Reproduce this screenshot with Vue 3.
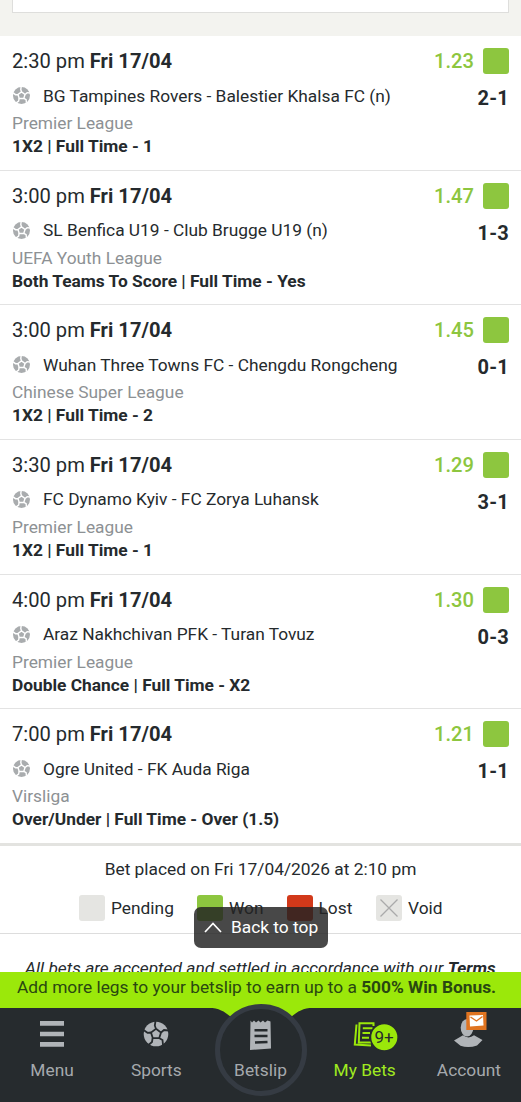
<template>
    <div class="page">
        <div class="top-area">
            <div class="top-box"></div>
        </div>

        <div class="bets">
            <div v-for="bet in bets" :key="bet.teams" class="bet">
                <div class="bet-head">
                    <div class="bet-time">{{ bet.time }} <b>Fri 17/04</b></div>
                    <div class="bet-odds">{{ bet.odds }}</div>
                    <span class="box won"></span>
                </div>
                <div class="bet-match">
                    <svg class="ball" viewBox="0 0 24 24">
                        <circle cx="12" cy="12" r="12" />
                        <path class="seams" d="M12 7L11 3.5L11.5 0M17 10.5L20 8L24 8.5M15.4 16.2L18.5 18L19 22M8.6 16.2L8 20L4.5 22.3M7 10.5L3.5 10.8L.2 8.3M12 6.8L17 10.5L15.2 16.2H8.8L7 10.5Z" />
                    </svg>
                    <div class="bet-teams">{{ bet.teams }}</div>
                    <div class="bet-score">{{ bet.score }}</div>
                </div>
                <div class="bet-league">{{ bet.league }}</div>
                <div class="bet-market">{{ bet.market }}</div>
            </div>
        </div>

        <div class="placed">
            <div class="placed-text">Bet placed on Fri 17/04/2026 at 2:10 pm</div>
            <div class="legend">
                <div v-for="item in legend" :key="item.name" class="legend-item" :class="item.name + '-item'">
                    <span class="box" :class="item.name">
                        <svg v-if="item.name === 'void'" viewBox="0 0 26 26">
                            <path d="M4.5 4.5L21.5 21.5M21.5 4.5L4.5 21.5" />
                        </svg>
                    </span>
                    <span>{{ item.label }}</span>
                </div>
            </div>
        </div>

        <div class="terms"><span>All bets are accepted and settled in accordance with our <b>Terms</b></span></div>

        <button class="to-top">
            <svg viewBox="0 0 18 11"><path d="M1 10L9 1.5L17 10" /></svg>
            <span>Back to top</span>
        </button>

        <div class="footer">
            <div class="bonus"><span>Add more legs to your betslip to earn up to a <b>500% Win Bonus.</b></span></div>
            <div class="nav">
                <svg class="nav-hump" viewBox="0 0 120 95">
                    <path class="hump-fill" d="M8 -.5H112C102 .5 97 3 90 9H30C23 3 18 .5 8 -.5Z" />
                    <circle cx="60" cy="42" r="43.5" />
                </svg>
                <div class="nav-item">
                    <svg class="icon" viewBox="0 0 60 44">
                        <path d="M18 13H42V17.8H18ZM18 23.7H42V28.3H18ZM18 34H42V38.7H18Z" />
                    </svg>
                    <span>Menu</span>
                </div>
                <div class="nav-item">
                    <svg class="icon" viewBox="0 0 60 44">
                        <g transform="translate(18 14)">
                            <circle cx="12" cy="12" r="12.3" />
                            <path class="seams" d="M12 7L10.8 3.5L11.5 -1M17 10.5L20 8L24.5 8.5M15.4 16.2L18.5 18L19 23M8.6 16.2L8 20L4.5 23M7 10.5L3.5 10.8L-.5 8M12 6.8L17 10.5L15.2 16.2H8.8L7 10.5Z" />
                        </g>
                    </svg>
                    <span>Sports</span>
                </div>
                <div class="nav-item">
                    <svg class="icon" viewBox="0 0 60 44">
                        <path d="M20.5 12.5L22 14.5L24 12.5L26 14.5L28.5 12.5L30.5 14.5L33 12.5L35 14.5L37.5 12.5L40.5 13.5L41 40.5L20 42Z" />
                        <path class="lines" d="M24.5 22.2H37.5M24.5 28H37.5M25 34.5L37.5 34" />
                    </svg>
                    <span>Betslip</span>
                </div>
                <div class="nav-item active">
                    <svg class="icon" viewBox="0 0 60 44">
                        <path class="stroke" d="M38.5 18V15.2H24.5L23.8 34.5H36M21.5 16.5L19.8 36.5L36 37.5M27.8 20.2H37.5M27.5 25H35M27 29.8H34" />
                        <circle class="count" cx="49.3" cy="29.3" r="13.8" />
                        <text x="49" y="35.3" text-anchor="middle">9+</text>
                    </svg>
                    <span>My Bets</span>
                </div>
                <div class="nav-item">
                    <svg class="icon" viewBox="0 0 60 44">
                        <path d="M15 32.5L24 27.3Q29.5 31.5 35 27.3L43.5 32L38 37.5Q29.5 40.5 21.5 37.8Z" />
                        <ellipse cx="28" cy="19.8" rx="6.3" ry="8.8" />
                        <path class="mail-bg" d="M27.3 4H47.5V22H27.3Z" />
                        <path class="mail" d="M30.5 7.5L44 7L44.5 17.5L31 18.5Z" />
                        <path class="mail-line" d="M31.5 9L37.5 13L43.5 8.5" />
                    </svg>
                    <span>Account</span>
                </div>
            </div>
        </div>
    </div>
</template>

<script setup>
const bets = [
    { time: '2:30 pm', odds: '1.23', teams: 'BG Tampines Rovers - Balestier Khalsa FC (n)', score: '2-1', league: 'Premier League', market: '1X2 | Full Time - 1' },
    { time: '3:00 pm', odds: '1.47', teams: 'SL Benfica U19 - Club Brugge U19 (n)', score: '1-3', league: 'UEFA Youth League', market: 'Both Teams To Score | Full Time - Yes' },
    { time: '3:00 pm', odds: '1.45', teams: 'Wuhan Three Towns FC - Chengdu Rongcheng', score: '0-1', league: 'Chinese Super League', market: '1X2 | Full Time - 2' },
    { time: '3:30 pm', odds: '1.29', teams: 'FC Dynamo Kyiv - FC Zorya Luhansk', score: '3-1', league: 'Premier League', market: '1X2 | Full Time - 1' },
    { time: '4:00 pm', odds: '1.30', teams: 'Araz Nakhchivan PFK - Turan Tovuz', score: '0-3', league: 'Premier League', market: 'Double Chance | Full Time - X2' },
    { time: '7:00 pm', odds: '1.21', teams: 'Ogre United - FK Auda Riga', score: '1-1', league: 'Virsliga', market: 'Over/Under | Full Time - Over (1.5)' }
]

const legend = [
    { name: 'pending', label: 'Pending' },
    { name: 'won', label: 'Won' },
    { name: 'lost', label: 'Lost' },
    { name: 'void', label: 'Void' }
]
</script>

<style>
body {
    background: #fff;
}
</style>

<style scoped>
.page {
    position: relative;
    height: 1102px;
    overflow: hidden;
    font-family: Roboto, sans-serif;
    font-size: 17.33px;
    color: #252a2d;
    white-space: nowrap;
}

.page * {
    box-sizing: border-box;
}

.top-area {
    height: 36px;
    padding: 0 12px;
    background: #f3f3ef;
}

.top-box {
    height: 13px;
    background: #fff;
    border: 1px solid #dededc;
    border-top: none;
}

.bet {
    height: 134.67px;
    padding: 11px 12px 0;
    border-bottom: 1px solid #e3e3e3;
}

.bet:last-child {
    border-bottom: 3px solid #e3e3e0;
    height: 136.67px;
}

.bet-head {
    display: flex;
    align-items: center;
    height: 28px;
    font-size: 20.15px;
}

.bet-time {
    flex: 1;
}

.bet-odds {
    color: #8dc63f;
    font-weight: 500;
    margin-right: 9px;
}

.box {
    display: block;
    width: 26px;
    height: 26px;
    border-radius: 3px;
}

.won {
    background: #8dc63f;
}

.lost {
    background: #d2391a;
}

.pending,
.void {
    background: #e5e5e2;
}

.void svg {
    display: block;
    fill: none;
    stroke: #aaa;
    stroke-width: 1.3;
}

.bet-match {
    display: flex;
    align-items: center;
    height: 42px;
    padding-bottom: 1px;
}

.ball {
    width: 17px;
    height: 17px;
    margin: 0 13px 0 1px;
    fill: #a9acae;
}

.ball .seams {
    fill: none;
    stroke: #fff;
    stroke-width: 2;
}

.bet-teams {
    flex: 1;
}

.bet-score {
    font-size: 20px;
    font-weight: 700;
    letter-spacing: 0.2px;
    padding-top: 5px;
}

.bet-league {
    color: #8d9194;
    line-height: 23px;
    margin-top: -5px;
}

.bet-market {
    font-weight: 700;
    line-height: 23px;
}

.placed {
    height: 88px;
    padding-top: 12px;
    border-bottom: 1px solid #ddd;
}

.placed-text {
    text-align: center;
    line-height: 22px;
}

.legend {
    display: flex;
    padding-left: 79px;
    margin-top: 15px;
}

.legend-item {
    display: flex;
    align-items: center;
    gap: 6px;
}

.pending-item {
    width: 118px;
}

.won-item {
    width: 89.5px;
}

.lost-item {
    width: 89.5px;
}

.terms {
    padding: 23px 0 0 25px;
    font-style: italic;
    line-height: 22px;
}

.to-top {
    position: absolute;
    left: 194px;
    top: 907px;
    width: 134px;
    height: 41px;
    display: flex;
    align-items: center;
    padding: 0 0 2px 10px;
    border: none;
    border-radius: 7px;
    background: rgba(35, 35, 35, 0.83);
    color: #fff;
    font-family: Roboto, sans-serif;
    font-size: 17.33px;
}

.to-top svg {
    width: 18px;
    height: 11px;
    margin: 2px 9px 0 0;
    fill: none;
    stroke: #fff;
    stroke-width: 1.7;
}

.footer {
    position: absolute;
    left: 0;
    right: 0;
    bottom: 0;
}

.bonus {
    height: 36px;
    padding-left: 17px;
    line-height: 31px;
    background: #9be80a;
    color: #294711;
}

.nav {
    position: relative;
    height: 94px;
    display: grid;
    grid-template-columns: repeat(5, 1fr);
    background: #262b2e;
}

.nav-hump {
    position: absolute;
    left: 200.5px;
    top: 0;
    width: 120px;
    height: 95px;
    overflow: visible;
}

.hump-fill {
    fill: #9be80a;
}

.nav-hump circle {
    fill: #262b2e;
    stroke: #353b43;
    stroke-width: 5;
}

.nav-item {
    position: relative;
    display: flex;
    flex-direction: column;
    align-items: center;
    color: #a5a9ad;
    line-height: 22px;
}

.icon {
    width: 60px;
    height: 44px;
    margin-bottom: 7px;
    fill: #b0b4b8;
    overflow: visible;
}

.icon .seams,
.icon .lines {
    fill: none;
    stroke: #262b2e;
    stroke-width: 1.8;
}

.icon .lines {
    stroke-width: 2.4;
}

.active {
    color: #a0ea20;
}

.icon .stroke {
    fill: none;
    stroke: #9be80a;
    stroke-width: 2;
}

.icon .count {
    fill: #9be80a;
    stroke: #262b2e;
    stroke-width: 1.5;
}

.icon text {
    fill: #262b2e;
    font-size: 17px;
}

.icon .mail-bg {
    fill: #e07420;
}

.icon .mail {
    fill: #fff;
}

.icon .mail-line {
    fill: none;
    stroke: #e07420;
    stroke-width: 1.4;
}
</style>
